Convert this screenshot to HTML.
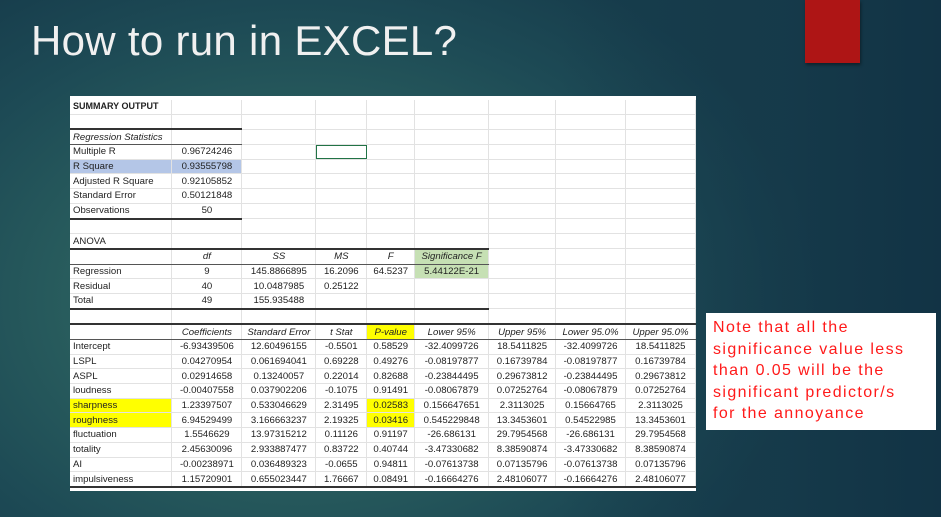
<!DOCTYPE html>
<html><head><meta charset="utf-8"><style>
html,body{margin:0;padding:0;}
body{width:941px;height:517px;overflow:hidden;position:relative;
background:radial-gradient(ellipse 520px 380px at 300px 300px,#34706a 0%,#285c5d 45%,#1d4a55 75%,#173d4c 100%);
font-family:"Liberation Sans",sans-serif;}
.glow{position:absolute;left:560px;top:0;width:381px;height:517px;background:linear-gradient(90deg,rgba(23,61,76,0) 0%,rgba(20,55,72,0.6) 60%,rgba(17,50,68,0.9) 100%);}
h1{position:absolute;left:31px;top:17px;margin:0;color:#f0f0f0;font-weight:normal;font-size:42px;letter-spacing:0.3px;}
.red{position:absolute;left:805px;top:0;width:55px;height:63px;background:#ae1515;box-shadow:1px 2px 3px rgba(0,0,0,0.4);}
.sheet{position:absolute;left:70px;top:96px;width:626px;height:395px;background:#fff;}
table{position:absolute;left:0;top:4px;border-collapse:collapse;table-layout:fixed;font-size:9.6px;color:#222;}
td{height:13.7px;padding:0 3px;border-right:1px solid #e2e2e2;border-bottom:1px solid #e2e2e2;white-space:nowrap;overflow:hidden;text-align:center;line-height:13px;}
td.l{text-align:left;}
.i{font-style:italic;}
.bb{border-bottom:1px solid #555;}
.bbk{border-bottom:2px solid #333;}
.y{background:#ffff00;}
.bl{background:#b4c6e7;}
.gr{background:#c6e0b4;}
.sel{outline:1.5px solid #217346;outline-offset:-1px;}
.note{position:absolute;left:706px;top:313px;width:230px;height:117px;background:#fff;color:#ff1a1a;font-size:16px;line-height:21.6px;padding:4px 0 0 7px;box-sizing:border-box;letter-spacing:1.4px;white-space:nowrap;}
</style></head><body>
<div class="glow"></div>
<h1>How to run in EXCEL?</h1>
<div class="red"></div>
<div class="sheet">
<table>
<colgroup><col style="width:102px"><col style="width:70px"><col style="width:74px"><col style="width:51px"><col style="width:48px"><col style="width:74px"><col style="width:67px"><col style="width:70px"><col style="width:70px"></colgroup>
<tr><td class="l" style="font-weight:bold;font-size:9px">SUMMARY OUTPUT</td><td></td><td></td><td></td><td></td><td></td><td></td><td></td><td></td></tr>
<tr><td class="bbk"></td><td class="bbk"></td><td></td><td></td><td></td><td></td><td></td><td></td><td></td></tr>
<tr><td class="l i bb">Regression Statistics</td><td class="bb"></td><td></td><td></td><td></td><td></td><td></td><td></td><td></td></tr>
<tr><td class="l">Multiple R</td><td>0.96724246</td><td></td><td class="sel"></td><td></td><td></td><td></td><td></td><td></td></tr>
<tr><td class="l bl">R Square</td><td class="bl">0.93555798</td><td></td><td></td><td></td><td></td><td></td><td></td><td></td></tr>
<tr><td class="l">Adjusted R Square</td><td>0.92105852</td><td></td><td></td><td></td><td></td><td></td><td></td><td></td></tr>
<tr><td class="l">Standard Error</td><td>0.50121848</td><td></td><td></td><td></td><td></td><td></td><td></td><td></td></tr>
<tr><td class="l bbk">Observations</td><td class="bbk">50</td><td></td><td></td><td></td><td></td><td></td><td></td><td></td></tr>
<tr><td></td><td></td><td></td><td></td><td></td><td></td><td></td><td></td><td></td></tr>
<tr><td class="l bbk">ANOVA</td><td class="bbk"></td><td class="bbk"></td><td class="bbk"></td><td class="bbk"></td><td class="bbk"></td><td></td><td></td><td></td></tr>
<tr><td class="bb"></td><td class="i bb">df</td><td class="i bb">SS</td><td class="i bb">MS</td><td class="i bb">F</td><td class="i bb gr">Significance F</td><td></td><td></td><td></td></tr>
<tr><td class="l">Regression</td><td>9</td><td>145.8866895</td><td>16.2096</td><td>64.5237</td><td class="gr">5.44122E-21</td><td></td><td></td><td></td></tr>
<tr><td class="l">Residual</td><td>40</td><td>10.0487985</td><td>0.25122</td><td></td><td></td><td></td><td></td><td></td></tr>
<tr><td class="l bbk">Total</td><td class="bbk">49</td><td class="bbk">155.935488</td><td class="bbk"></td><td class="bbk"></td><td class="bbk"></td><td></td><td></td><td></td></tr>
<tr><td class="bbk"></td><td class="bbk"></td><td class="bbk"></td><td class="bbk"></td><td class="bbk"></td><td class="bbk"></td><td class="bbk"></td><td class="bbk"></td><td class="bbk"></td></tr>
<tr><td class="bb"></td><td class="i bb">Coefficients</td><td class="i bb">Standard Error</td><td class="i bb">t Stat</td><td class="i bb y">P-value</td><td class="i bb">Lower 95%</td><td class="i bb">Upper 95%</td><td class="i bb">Lower 95.0%</td><td class="i bb">Upper 95.0%</td></tr>
<tr><td class="l">Intercept</td><td>-6.93439506</td><td>12.60496155</td><td>-0.5501</td><td>0.58529</td><td>-32.4099726</td><td>18.5411825</td><td>-32.4099726</td><td>18.5411825</td></tr>
<tr><td class="l">LSPL</td><td>0.04270954</td><td>0.061694041</td><td>0.69228</td><td>0.49276</td><td>-0.08197877</td><td>0.16739784</td><td>-0.08197877</td><td>0.16739784</td></tr>
<tr><td class="l">ASPL</td><td>0.02914658</td><td>0.13240057</td><td>0.22014</td><td>0.82688</td><td>-0.23844495</td><td>0.29673812</td><td>-0.23844495</td><td>0.29673812</td></tr>
<tr><td class="l">loudness</td><td>-0.00407558</td><td>0.037902206</td><td>-0.1075</td><td>0.91491</td><td>-0.08067879</td><td>0.07252764</td><td>-0.08067879</td><td>0.07252764</td></tr>
<tr><td class="l y">sharpness</td><td>1.23397507</td><td>0.533046629</td><td>2.31495</td><td class="y">0.02583</td><td>0.156647651</td><td>2.3113025</td><td>0.15664765</td><td>2.3113025</td></tr>
<tr><td class="l y">roughness</td><td>6.94529499</td><td>3.166663237</td><td>2.19325</td><td class="y">0.03416</td><td>0.545229848</td><td>13.3453601</td><td>0.54522985</td><td>13.3453601</td></tr>
<tr><td class="l">fluctuation</td><td>1.5546629</td><td>13.97315212</td><td>0.11126</td><td>0.91197</td><td>-26.686131</td><td>29.7954568</td><td>-26.686131</td><td>29.7954568</td></tr>
<tr><td class="l">totality</td><td>2.45630096</td><td>2.933887477</td><td>0.83722</td><td>0.40744</td><td>-3.47330682</td><td>8.38590874</td><td>-3.47330682</td><td>8.38590874</td></tr>
<tr><td class="l">AI</td><td>-0.00238971</td><td>0.036489323</td><td>-0.0655</td><td>0.94811</td><td>-0.07613738</td><td>0.07135796</td><td>-0.07613738</td><td>0.07135796</td></tr>
<tr><td class="l bbk">impulsiveness</td><td class="bbk">1.15720901</td><td class="bbk">0.655023447</td><td class="bbk">1.76667</td><td class="bbk">0.08491</td><td class="bbk">-0.16664276</td><td class="bbk">2.48106077</td><td class="bbk">-0.16664276</td><td class="bbk">2.48106077</td></tr>
</table>
</div>
<div class="note">Note that all the<br>significance value less<br>than 0.05 will be the<br>significant predictor/s<br>for the annoyance</div>
</body></html>
